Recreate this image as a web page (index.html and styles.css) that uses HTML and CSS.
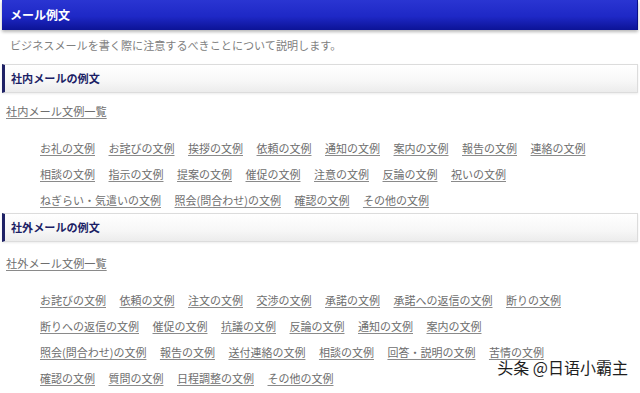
FILE: index.html
```html
<!DOCTYPE html>
<html lang="ja">
<head>
<meta charset="utf-8">
<title>メール例文</title>
<link rel="stylesheet" href="styles.css">
</head>
<body>
<div class="page">
  <h1 class="main-title">メール例文</h1>
  <p class="desc">ビジネスメールを書く際に注意するべきことについて説明します。</p>

  <section class="block block-first">
    <h2 class="sec-title">社内メールの例文</h2>
    <p class="all-link"><a href="#">社内メール文例一覧</a></p>
    <ul class="links">
      <li><a href="#">お礼の文例</a></li>
      <li><a href="#">お詫びの文例</a></li>
      <li><a href="#">挨拶の文例</a></li>
      <li><a href="#">依頼の文例</a></li>
      <li><a href="#">通知の文例</a></li>
      <li><a href="#">案内の文例</a></li>
      <li><a href="#">報告の文例</a></li>
      <li><a href="#">連絡の文例</a></li>
      <li><a href="#">相談の文例</a></li>
      <li><a href="#">指示の文例</a></li>
      <li><a href="#">提案の文例</a></li>
      <li><a href="#">催促の文例</a></li>
      <li><a href="#">注意の文例</a></li>
      <li><a href="#">反論の文例</a></li>
      <li><a href="#">祝いの文例</a></li>
      <li class="br"></li>
      <li><a href="#">ねぎらい・気遣いの文例</a></li>
      <li><a href="#">照会(問合わせ)の文例</a></li>
      <li><a href="#">確認の文例</a></li>
      <li><a href="#">その他の文例</a></li>
    </ul>
  </section>

  <section class="block block-second">
    <h2 class="sec-title">社外メールの例文</h2>
    <p class="all-link"><a href="#">社外メール文例一覧</a></p>
    <ul class="links">
      <li><a href="#">お詫びの文例</a></li>
      <li><a href="#">依頼の文例</a></li>
      <li><a href="#">注文の文例</a></li>
      <li><a href="#">交渉の文例</a></li>
      <li><a href="#">承諾の文例</a></li>
      <li><a href="#">承諾への返信の文例</a></li>
      <li><a href="#">断りの文例</a></li>
      <li class="br"></li>
      <li><a href="#">断りへの返信の文例</a></li>
      <li><a href="#">催促の文例</a></li>
      <li><a href="#">抗議の文例</a></li>
      <li><a href="#">反論の文例</a></li>
      <li><a href="#">通知の文例</a></li>
      <li><a href="#">案内の文例</a></li>
      <li class="br"></li>
      <li><a href="#">照会(問合わせ)の文例</a></li>
      <li><a href="#">報告の文例</a></li>
      <li><a href="#">送付連絡の文例</a></li>
      <li><a href="#">相談の文例</a></li>
      <li><a href="#">回答・説明の文例</a></li>
      <li><a href="#">苦情の文例</a></li>
      <li class="br"></li>
      <li><a href="#">確認の文例</a></li>
      <li><a href="#">質問の文例</a></li>
      <li><a href="#">日程調整の文例</a></li>
      <li><a href="#">その他の文例</a></li>
    </ul>
  </section>
</div>
<div class="watermark">头条 @日语小霸主</div>
</body>
</html>
```

FILE: styles.css
```css
html, body {
  margin: 0;
  padding: 0;
  background: #ffffff;
}
body {
  font-family: "Noto Sans CJK JP", "Noto Sans", sans-serif;
  font-size: 11px;
  color: #777777;
  position: relative;
  min-height: 393px;
  overflow: hidden;
}
.page {
  padding: 0 2px;
}
.main-title {
  margin: 0;
  height: 30px;
  line-height: 30px;
  padding: 0 8px;
  font-size: 12px;
  font-weight: bold;
  color: #ffffff;
  background: linear-gradient(to bottom, #2a35d2 0%, #1e28c6 55%, #0c1396 100%);
  border-right: 1px solid #0a0f88;
  box-shadow: 0 2px 3px rgba(0, 0, 0, 0.28);
}
.desc {
  margin: 5px 0 0;
  padding: 0 8px;
  line-height: 20px;
  font-size: 11.1px;
  color: #808080;
}
.block-first {
  margin-top: 9px;
}
.block-second {
  margin-top: 0;
}
.sec-title {
  margin: 0;
  height: 27px;
  line-height: 27px;
  padding: 0 6px;
  font-size: 11.1px;
  font-weight: bold;
  color: #1c1f66;
  background: linear-gradient(to bottom, #ffffff 0%, #f7f7f7 60%, #ececec 100%);
  border: 1px solid #dcdcdc;
  border-left: 3px solid #1f2266;
  box-shadow: 0 1px 2px rgba(0, 0, 0, 0.08);
}
.all-link {
  margin: 8px 0 0;
  padding: 0 4px;
  line-height: 20px;
  font-size: 11.2px;
}
.block-second .all-link {
  margin-top: 11px;
}
a {
  color: #6e6e6e;
  text-decoration: underline;
  text-decoration-color: #8a8a8a;
  text-underline-offset: 2px;
}
.links {
  margin: 14px 0 0;
  padding: 0 0 0 38px;
  list-style: none;
  display: flex;
  flex-wrap: wrap;
  column-gap: 13.5px;
  line-height: 26px;
  max-width: 570px;
}
.links li.br {
  flex-basis: 100%;
  height: 0;
}
.watermark {
  position: absolute;
  right: 12px;
  top: 359px;
  font-family: "Noto Sans CJK SC", sans-serif;
  font-size: 16px;
  line-height: 17px;
  color: #1e1e1e;
  text-shadow: 0 0 2px #ffffff, 0 0 2px #ffffff;
}
```
